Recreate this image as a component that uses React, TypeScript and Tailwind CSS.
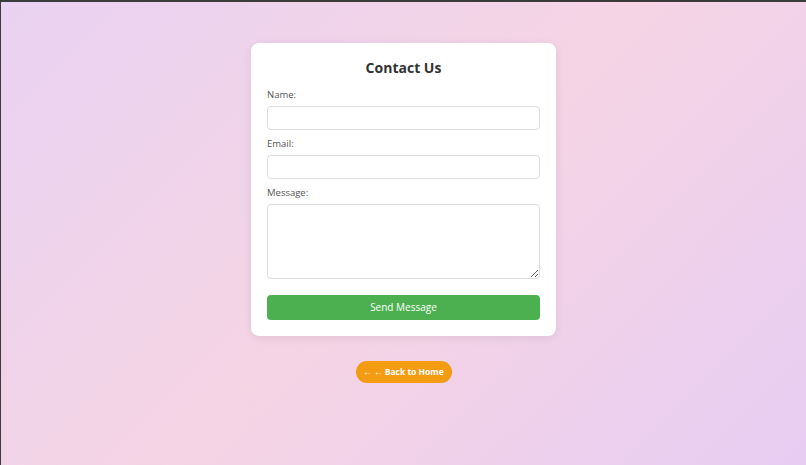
export default function App() {
  return (
    <div
      className="min-h-screen border-t-2 border-l border-[#3b3b3b] bg-[linear-gradient(135deg,#e9d2f2_0%,#f5d4e4_50%,#e8cdf3_100%)] pt-[41px] pb-10 flex flex-col items-center"
      style={{ fontFamily: '"Open Sans", "Noto Sans", sans-serif' }}
    >
      <div className="w-[305px] bg-white rounded-lg shadow-[0_2px_10px_rgba(0,0,0,0.08)] px-4 pt-4 pb-4">
        <h2 className="text-center text-[14px] leading-[18px] font-bold text-[#333] mb-3">Contact Us</h2>
        <form onSubmit={(e) => e.preventDefault()} className="flex flex-col">
          <label className="text-[9.5px] leading-[12px] text-[#555] mb-[5px]">Name:</label>
          <input
            type="text"
            className="h-6 w-full border border-[#ddd] rounded-[4px] px-2 text-[10px] outline-none mb-2"
          />
          <label className="text-[9.5px] leading-[12px] text-[#555] mb-[5px]">Email:</label>
          <input
            type="email"
            className="h-6 w-full border border-[#ddd] rounded-[4px] px-2 text-[10px] outline-none mb-2"
          />
          <label className="text-[9.5px] leading-[12px] text-[#555] mb-[5px]">Message:</label>
          <textarea className="h-[75px] w-full border border-[#ddd] rounded-[4px] px-2 py-1 text-[10px] outline-none block" />
          <button
            type="submit"
            className="mt-4 h-[25px] w-full bg-[#4caf50] text-white text-[10px] rounded-[4px]"
          >
            Send Message
          </button>
        </form>
      </div>
      <button className="mt-[25px] h-[22px] w-[96px] rounded-full bg-[#f39c12] text-white text-[8.5px] font-bold flex items-center justify-center">
        ← ← Back to Home
      </button>
    </div>
  );
}
